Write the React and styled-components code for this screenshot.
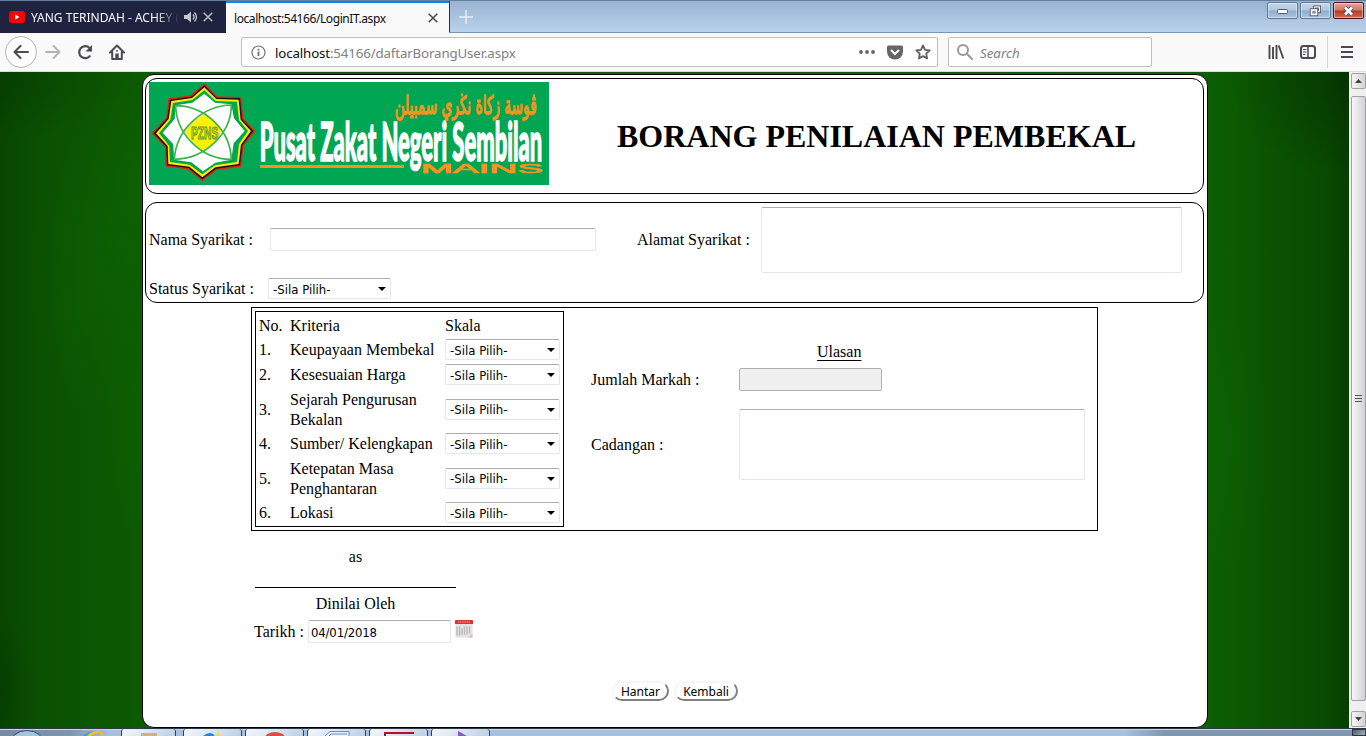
import React from 'react';
import styled, { createGlobalStyle, css } from 'styled-components';

const Global = createGlobalStyle`
  * { box-sizing: border-box; }
  body { margin: 0; overflow: hidden; }
`;
const ui = '"Noto Sans", "Open Sans", sans-serif';
const form = '"DejaVu Sans Condensed", "DejaVu Sans", sans-serif';

const Screen = styled.div`
  width: 1366px; height: 736px; display: flex; flex-direction: column; overflow: hidden;
  font: 16px/20px "Liberation Serif", serif; color: #000;
`;
const TitleBar = styled.div`
  height: 33px; display: flex; align-items: stretch; flex: none;
  background: linear-gradient(#98b3d2, #bad2eb); border-top: 1px solid #64809c; border-bottom: 1px solid #7b94b1;
`;
const Tab = styled.div`
  display: flex; align-items: center; height: 32px; font: 12px ${ui}; white-space: nowrap;
  ${p => p.$active
    ? css`width: 223px; padding: 0 11px 0 8px; background: #f9f9fa; border-top: 2px solid #0a84ff; color: #0c0c0d; justify-content: space-between; letter-spacing: -0.42px;`
    : css`width: 226px; padding: 0 12px 0 9px; background: #202340; color: #f9f9fa;`}
`;
const TabTitle = styled.span`
  width: 148px; margin: 0 5px 0 6px; overflow: hidden; letter-spacing: 0;
  mask-image: linear-gradient(90deg, #000 84%, transparent);
`;
const TabClose = styled.span`display: flex; margin-left: 4px;`;
const NewTab = styled.div`width: 33px; border-left: 1px solid #202c4a; display: flex; align-items: center; justify-content: center;`;
const WindowButtons = styled.div`margin-left: auto; display: flex; gap: 2px; padding: 1px 2px 0 0;`;
const WindowButton = styled.div`
  width: 31px; height: 17px; border: 1px solid ${p => (p.$close ? '#4c1620' : '#5d7797')}; border-radius: 2px;
  display: flex; align-items: center; justify-content: center; box-shadow: inset 0 0 0 1px #ffffff70;
  background: ${p => (p.$close ? 'linear-gradient(#e6a396, #d27865 48%, #b53a22 52%, #cb6c50)' : 'linear-gradient(#c3d5e9, #b2c8e0 48%, #91aecd 52%, #aac4df)')};
`;
const Toolbar = styled.div`
  height: 39px; flex: none; display: flex; align-items: center; background: #f9f9fa; border-bottom: 1px solid #dcdcdd; padding-left: 5px;
`;
const BackButton = styled.div`
  width: 32px; height: 32px; border: 1px solid #b5b5b7; border-radius: 50%; background: #fdfdfd; display: flex; align-items: center; justify-content: center;
`;
const ToolIcon = styled.div`width: 32px; display: flex; justify-content: center;`;
const Field = styled.div`
  height: 30px; display: flex; align-items: center; background: #fff; border: 1px solid #bfbfc1; border-radius: 2px; font: 13.3px ${ui}; color: #808080;
`;
const UrlField = styled(Field)`width: 697px; margin-left: 108px; padding: 0 6px 0 9px; letter-spacing: -0.14px;`;
const SearchField = styled(Field)`width: 204px; margin-left: 10px; padding-left: 8px; gap: 7px; font-style: italic;`;
const SearchHint = styled.span`padding-top: 2px;`;
const Url = styled.span`margin-left: 9px; padding-top: 2px; flex: 1; b { font-weight: 400; color: #0c0c0d; }`;
const UrlActions = styled.div`display: flex; align-items: center; gap: 12px;`;
const MenuArea = styled.div`margin-left: auto; display: flex; align-items: center;`;
const MenuButton = styled.div`height: 32px; width: 39px; margin-left: 3px; border-left: 1px solid #d7d7db; display: flex; align-items: center; justify-content: center;`;

const Viewport = styled.div`
  height: 656px; flex: none; display: flex;
`;
const Backdrop = styled.div`
  flex: 1; padding: 2px 0 0 142px;
  background:
    radial-gradient(ellipse 80px 150px at 105px 200px, #0d6c0450, transparent),
    radial-gradient(ellipse 60px 110px at 140px 110px, #0d700050, transparent),
    radial-gradient(ellipse 40px 130px at 142px 340px, #0d700040, transparent),
    radial-gradient(ellipse 130px 70px at 0 0, #022c0058, transparent),
    radial-gradient(ellipse 35px 80px at 0 620px, #022c0050, transparent),
    radial-gradient(ellipse 120px 110px at 1349px 0, #02260080, transparent),
    radial-gradient(ellipse 50px 130px at 1215px 370px, #0d6c0450, transparent),
    linear-gradient(90deg, #084600, #0a4e02 30px, #0b5402 65px, #0c5a02 142px, #0c5f02 1207px, #0b5502 1260px, #094b01 1325px, #073e00 1349px);
`;
const Card = styled.main`
  width: 1066px; height: 654px; border: 1px solid #000; border-radius: 12px; background: #fff; padding: 3px 3px 0 2px;
`;
const Panel = styled.section`width: 1059px; border: 1px solid #000; border-radius: 12px;`;
const HeaderPanel = styled(Panel)`height: 116px; display: flex; padding: 3px;`;
const Heading = styled.h1`
  margin: 0; flex: 1; padding: 36px 0 0 4px; text-align: center; font-size: 32px; line-height: 36px; font-weight: 700;
`;
const CompanyPanel = styled(Panel)`
  height: 101px; margin-top: 8px; padding: 0 3px; display: grid; grid-template-columns: 118px 370px 124px 1fr; grid-template-rows: 73px 25px; align-items: center;
`;
const TextInput = styled.input`
  width: ${p => p.$w}px; height: 23px; padding: 2px 2px 0; border: 1px solid #e3e6ec; border-top-color: #abadb3; border-radius: 2px; background: #fff; outline: 0;
  font: 13px ${form}; color: #000; letter-spacing: -0.15px;
  &:disabled { background: #f0f0f0; border-color: #b0b0b0; }
`;
const NameInput = styled(TextInput)`margin-left: 3px;`;
const TextArea = styled.textarea`
  display: block; width: ${p => p.$w}px; height: ${p => p.$h}px; border: 1px solid #e3e6ec; border-top-color: #abadb3; border-radius: 2px; resize: none; outline: 0;
`;
const SelectBox = styled.div`
  width: ${p => p.$w}px; height: 21px; border: 1px solid #e3e6ec; border-top-color: #abadb3; border-radius: 2px; background: #fff;
  display: flex; align-items: center; justify-content: space-between; padding: 1px 4px 0; font: 13px/18px ${form}; letter-spacing: 0.03px;
  span { padding-top: 1px; }
`;
const StatusField = styled.div`margin-left: 1px;`;

const Assessment = styled.section`
  width: 847px; height: 224px; margin: 4px 0 0 106px; border: 1px solid #000; padding: 3px; display: flex;
`;
const Criteria = styled.div`width: 309px; height: 216px; border: 1px solid #000; padding: 0 3px;`;
const CriteriaRow = styled.div`
  display: grid; grid-template-columns: 31px 155px 115px; height: ${p => p.$h || 25}px; align-items: center;
  > span { padding-top: ${p => (p.$head ? 3 : p.$h ? 2 : 1)}px; }
`;
const Review = styled.div`
  flex: 1; padding: 30px 0 0 27px; display: grid; grid-template-columns: 148px 1fr; grid-template-rows: 21px 35px 95px; align-items: center;
`;
const ReviewTitle = styled.div`grid-column: 2; text-decoration: underline; text-underline-offset: 3px; padding-left: 78px;`;
const Signature = styled.section`width: 240px; margin: 15px 0 0 109px;`;
const Signer = styled.div`width: 201px; height: 42px; margin-left: 1px; padding-top: 1px; border-bottom: 1px solid #000; text-align: center;`;
const SignCaption = styled.div`width: 201px; margin-left: 1px; padding-top: 6px; text-align: center;`;
const DateRow = styled.div`display: flex; align-items: center; margin-top: 6px; label { width: 54px; padding-top: 1px; } svg { margin: -5px 0 0 4px; }`;
const Actions = styled.div`display: flex; gap: 5px; margin: 38px 0 0 467px;`;
const ActionButton = styled.button`
  height: 20px; width: ${p => p.$w}px; padding: 0; border: 2px solid; border-color: #f6f6f6 #808080 #808080 #f6f6f6; border-radius: 10px; background: #fff;
  font: 12px/15px ${ui}; color: #000;
`;
const Scrollbar = styled.div`
  width: 17px; background: #f0f0f1; display: flex; flex-direction: column; align-items: center; padding: 1px 0 0 1px;
`;
const ScrollButton = styled.div`
  width: 15px; height: 16px; border: 1px solid #a0a0a3; border-radius: 2px; background: linear-gradient(90deg, #f6f6f6, #d2d2d5); display: flex; align-items: center; justify-content: center;
`;
const Thumb = styled(ScrollButton)`height: 605px; margin: 7px 0 10px;`;
const Taskbar = styled.div`
  height: 8px; flex: none; display: flex; align-items: flex-start; border-top: 1px solid #2d3846; box-shadow: inset 0 1px #c9d8e9;
  background: linear-gradient(90deg, #788ba3, #8093ad 70px, #a6c0de 110px, #a6c0de 1125px, #8295af 1165px, #8295af);
`;
const StartArea = styled.div`width: 121px; height: 7px; svg { display: block; }`;
const TaskButton = styled.div`
  width: ${p => p.$w || 59}px; height: 7px; margin-right: ${p => p.$gap || 3}px; border: 1px solid #2f3e52; border-width: 0 1px; border-radius: 3px 3px 0 0;
  background: linear-gradient(135deg, #f4f7fb, #bdd0e6); display: flex; justify-content: center; align-items: flex-end;
`;
const ShowDesktop = styled.div`width: 14px; height: 7px; margin-left: auto; border: 1px solid #303846; background: linear-gradient(135deg, #4e5a68, #a6b1bf);`;

const Cross = ({ color, size = 10 }) => (
  <svg width={size} height={size} viewBox="0 0 10 10"><path d="M.7.7 9.3 9.3M9.3.7.7 9.3" stroke={color} strokeWidth="1.5" /></svg>
);

const Select = ({ width }) => (
  <SelectBox $w={width}>
    <span>-Sila Pilih-</span>
    <svg width="8" height="4" viewBox="0 0 8 4"><path d="M0 0h8L4 4z" /></svg>
  </SelectBox>
);

const Logo = () => (
  <svg width="400" height="103" viewBox="21 36 1200 309">
    <rect x="21" y="36" width="1200" height="309" fill="#00a651" />
    <path d="M187 40 226 79 298 81 304 145 340 183 305 228 298 290 224 300 181 334 138 298 71 290 69 232 29 190 72 143 80 85 146 76Z" fill="#e2211c" />
    <path d="M187 46 224 83 294 85 300 147 334 183 301 226 294 286 222 296 181 328 140 294 75 286 73 230 35 190 76 145 84 89 148 80Z" fill="#111" />
    <path d="M187 52 223 87 290 89 296 149 327 183 297 224 290 282 220 292 181 322 142 290 79 282 77 228 42 190 80 147 88 93 150 84Z" fill="#ffec00" />
    <path d="M187 61 221 93 285 95 291 151 318 183 291 222 285 276 219 286 181 313 143 284 84 276 82 228 51 190 85 149 93 99 151 90Z" fill="#00a651" />
    <path d="M187 71 219 98 268 103 276 145 308 183 275 220 268 269 220 278 183 304 148 277 96 269 94 223 62 188 98 147 101 106 151 98Z" fill="#fff" />
    <path d="M185 134Q220 150 238 184 221 220 184 242 147 219 130 186 150 150 185 134Z" fill="#fff200" />
    <g fill="none" stroke="#3bb44a" strokeWidth="5">
      <path d="M101 107C190 108 265 180 268 268M101 107C103 190 175 268 268 268M268 105C180 107 102 180 97 268M268 105C268 190 190 267 97 268" />
    </g>
    <text x="147" y="207" textLength="82" lengthAdjust="spacingAndGlyphs" fontFamily="Liberation Sans" fontWeight="700" fontSize="50" fill="#e8dc15" stroke="#4c9a31" strokeWidth="3">PZNS</text>
    <text transform="translate(1184 131) scale(1 1.22)" textLength="426" lengthAdjust="spacingAndGlyphs" direction="rtl" fontFamily="DejaVu Sans" fontSize="62" fill="#f7941d" stroke="#f7941d" strokeWidth="3.500">ڤوسة زكاة نڬري سمبيلن</text>
    <text transform="translate(353 273) scale(1 1.600)" textLength="848" lengthAdjust="spacingAndGlyphs" fontFamily="Lato, sans-serif" fontWeight="900" fontSize="101" fill="#fff" stroke="#fff" strokeWidth="3">Pusat Zakat Negeri Sembilan</text>
    <rect x="354" y="285" width="432" height="9" fill="#f7941d" />
    <text x="836" y="310" textLength="367" lengthAdjust="spacingAndGlyphs" fontFamily="Liberation Sans" fontWeight="400" fontSize="41" fill="#f7941d" stroke="#f7941d" strokeWidth="2">MAINS</text>
  </svg>
);

const criteria = [
  ['Keupayaan Membekal'], ['Kesesuaian Harga'], ['Sejarah Pengurusan Bekalan', 44],
  ['Sumber/ Kelengkapan'], ['Ketepatan Masa Penghantaran', 44], ['Lokasi'],
];

const BrowserChrome = () => (
  <>
    <TitleBar>
      <Tab>
        <svg width="16" height="12" viewBox="0 0 16 12"><rect width="16" height="12" rx="3" fill="#f00" /><path d="M6.3 3.5v5L10.5 6z" fill="#fff" /></svg>
        <TabTitle>YANG TERINDAH - ACHEY (</TabTitle>
        <svg width="15" height="12" viewBox="0 0 15 12"><path d="M0 4h3l4-3.5v11L3 8H0z" fill="#c6c7cf" /><path d="M9 3.5q2 2.5 0 5M10.5 1.5q4 4.500 0 9" fill="none" stroke="#c6c7cf" strokeWidth="1.300" /></svg>
        <TabClose><Cross color="#b9bac4" /></TabClose>
      </Tab>
      <Tab $active><span>localhost:54166/LoginIT.aspx</span><Cross color="#4a4a4f" /></Tab>
      <NewTab><svg width="14" height="14" viewBox="0 0 14 14"><path d="M7 0v14M0 7h14" stroke="#e6eff8" strokeWidth="1.500" /></svg></NewTab>
      <WindowButtons>
        <WindowButton><svg width="12" height="6" viewBox="0 0 12 6"><rect x=".5" y="1.500" width="10" height="4" rx="1" fill="#fff" stroke="#535666" /></svg></WindowButton>
        <WindowButton><svg width="13" height="12" viewBox="0 0 13 12"><rect x="5.500" y="2" width="5" height="4.500" fill="none" stroke="#535666" strokeWidth="3" /><rect x="5.500" y="2" width="5" height="4.500" fill="none" stroke="#fff" strokeWidth="1.200" /><rect x="2.500" y="5" width="5" height="4.500" fill="none" stroke="#535666" strokeWidth="3.400" /><rect x="2.500" y="5" width="5" height="4.500" fill="#7b90aa" stroke="#fff" strokeWidth="1.600" /></svg></WindowButton>
        <WindowButton $close><svg width="13" height="10" viewBox="0 0 13 10"><path d="m3 1.500 7 7M10 1.500l-7 7" stroke="#535666" strokeWidth="4.500" /><path d="m3 1.500 7 7M10 1.500l-7 7" stroke="#fff" strokeWidth="2.500" /></svg></WindowButton>
      </WindowButtons>
    </TitleBar>
    <Toolbar>
      <BackButton><svg width="16" height="14" viewBox="0 0 16 14"><path d="M15 7H1.500M7.500 1l-6 6 6 6" fill="none" stroke="#4a4a4f" strokeWidth="2" strokeLinecap="round" strokeLinejoin="round" /></svg></BackButton>
      <ToolIcon><svg width="16" height="14" viewBox="0 0 16 14"><path d="M1 7h13.500M8.500 1l6 6-6 6" fill="none" stroke="#b5b5b8" strokeWidth="2" strokeLinecap="round" strokeLinejoin="round" /></svg></ToolIcon>
      <ToolIcon><svg width="16" height="16" viewBox="0 0 16 16"><path d="M13.200 11.500A6 6 0 1 1 12.500 4" fill="none" stroke="#4a4a4f" strokeWidth="2.200" /><path d="M15 1v6.500H8.500z" fill="#4a4a4f" /></svg></ToolIcon>
      <ToolIcon><svg width="16" height="16" viewBox="0 0 16 16"><path d="M1 8.500 8 1.500l7 7M3.200 8V15h9.600V8" fill="none" stroke="#4a4a4f" strokeWidth="2" strokeLinecap="round" strokeLinejoin="round" /><path d="M6.300 9.500h3.400V15H6.300z" fill="#4a4a4f" /><rect x="7.200" y="6" width="1.600" height="1.600" fill="#4a4a4f" /></svg></ToolIcon>
      <UrlField>
        <svg width="15" height="15" viewBox="0 0 15 15"><circle cx="7.500" cy="7.500" r="6.500" fill="none" stroke="#737373" strokeWidth="1.200" /><path d="M6.600 6.500h1.800V11H6.600zM6.600 3.700h1.800v1.700H6.600z" fill="#737373" /></svg>
        <Url><b>localhost</b>:54166/daftarBorangUser.aspx</Url>
        <UrlActions>
          <svg width="16" height="4" viewBox="0 0 16 4" fill="#666"><circle cx="2" cy="2" r="1.900" /><circle cx="8" cy="2" r="1.900" /><circle cx="14" cy="2" r="1.900" /></svg>
          <svg width="16" height="15" viewBox="0 0 16 15"><path d="M1.500.5h13q1.500 0 1.500 1.500v4.500a8 8 0 0 1-16 0V2Q0 .5 1.500.5z" fill="#666" /><path d="m4.500 5.500 3.500 3.500 3.500-3.500" fill="none" stroke="#fff" strokeWidth="2" strokeLinecap="round" /></svg>
          <svg width="16" height="16" viewBox="0 0 16 16"><path d="m8 1.500 2 4.300 4.700.6-3.500 3.300.9 4.700L8 12.100l-4.100 2.300.9-4.700L1.300 6.400 6 5.800z" fill="none" stroke="#606063" strokeWidth="1.800" strokeLinejoin="round" /></svg>
        </UrlActions>
      </UrlField>
      <SearchField>
        <svg width="16" height="16" viewBox="0 0 16 16"><circle cx="6" cy="6" r="5" fill="none" stroke="#989898" strokeWidth="2" /><path d="m9.800 9.800 5.200 5.200" stroke="#989898" strokeWidth="2" strokeLinecap="round" /></svg>
        <SearchHint>Search</SearchHint>
      </SearchField>
      <MenuArea>
        <ToolIcon><svg width="16" height="14" viewBox="0 0 16 14"><path d="M1.500 0v14M5 2v12M8.500 0v14M10.700.500l4.600 13" fill="none" stroke="#4a4a4f" strokeWidth="1.900" /></svg></ToolIcon>
        <ToolIcon><svg width="16" height="14" viewBox="0 0 16 14"><rect x="1" y="1" width="14" height="12" rx="2.500" fill="none" stroke="#4a4a4f" strokeWidth="2" /><path d="M8 1v12" stroke="#4a4a4f" strokeWidth="1.500" /><path d="M3 4.500h3.500M3 7h3.500M3 9.500h2.500" stroke="#4a4a4f" /></svg></ToolIcon>
        <MenuButton><svg width="12" height="12" viewBox="0 0 12 12"><path d="M0 1h12M0 6h12M0 11h12" stroke="#4a4a4f" strokeWidth="2" /></svg></MenuButton>
      </MenuArea>
    </Toolbar>
  </>
);

export default function App() {
  return (
    <Screen>
      <Global />
      <BrowserChrome />
      <Viewport>
        <Backdrop>
          <Card>
            <HeaderPanel><Logo /><Heading>BORANG PENILAIAN PEMBEKAL</Heading></HeaderPanel>
            <CompanyPanel>
              <label>Nama Syarikat :</label><NameInput $w={326} />
              <label>Alamat Syarikat :</label><TextArea $w={421} $h={66} />
              <label>Status Syarikat :</label><StatusField><Select width={123} /></StatusField>
            </CompanyPanel>
            <Assessment>
              <Criteria>
                <CriteriaRow $head><span>No.</span><span>Kriteria</span><span>Skala</span></CriteriaRow>
                {criteria.map(([name, h], i) => (
                  <CriteriaRow key={name} $h={h}><span>{i + 1}.</span><span>{name}</span><Select width={115} /></CriteriaRow>
                ))}
              </Criteria>
              <Review>
                <ReviewTitle>Ulasan</ReviewTitle>
                <label>Jumlah Markah :</label><TextInput $w={143} disabled />
                <label>Cadangan :</label><TextArea $w={346} $h={71} />
              </Review>
            </Assessment>
            <Signature>
              <Signer>as</Signer>
              <SignCaption>Dinilai Oleh</SignCaption>
              <DateRow>
                <label>Tarikh :</label><TextInput $w={143} defaultValue="04/01/2018" />
                <svg width="18" height="18" viewBox="0 0 18 18"><rect x=".5" y="1" width="17" height="16.500" rx="1" fill="#e4e1df" /><path d="M0 1q0-1 1-1h16q1 0 1 1v3H0z" fill="#d8352a" /><path d="M3 2h12" stroke="#f09a92" strokeDasharray="1.500 .6" /><path d="M2 6.500v9M4.500 6.500v9M7 8v7M9.500 6.500v8M12 6.500v8M14.500 6.500v7" stroke="#b9b9bb" strokeWidth="1.300" /><path d="m13 17.500 4.500-4v4z" fill="#c6c2c0" /></svg>
              </DateRow>
            </Signature>
            <Actions><ActionButton $w={57}>Hantar</ActionButton><ActionButton $w={64}>Kembali</ActionButton></Actions>
          </Card>
        </Backdrop>
        <Scrollbar>
          <ScrollButton><svg width="7" height="4" viewBox="0 0 7 4"><path d="M0 4h7L3.500 0z" fill="#444" /></svg></ScrollButton>
          <Thumb><svg width="7" height="8" viewBox="0 0 7 8"><path d="M0 .5h7M0 3.500h7M0 6.500h7" stroke="#555" /></svg></Thumb>
          <ScrollButton><svg width="7" height="4" viewBox="0 0 7 4"><path d="M0 0h7L3.500 4z" fill="#444" /></svg></ScrollButton>
        </Scrollbar>
      </Viewport>
      <Taskbar>
        <StartArea><svg width="121" height="7" viewBox="0 0 121 7"><ellipse cx="27" cy="15" rx="17" ry="13.500" fill="#a9c3d8" stroke="#254f78" /><path d="M84 7q6-4 12-3" stroke="#3ba0dc" strokeWidth="2.500" fill="none" /><path d="M88 7q12-8 15 0" stroke="#f2bf25" strokeWidth="2.500" fill="none" /></svg></StartArea>
        <TaskButton $w={55} $gap={7}><svg width="16" height="3"><rect width="16" height="3" fill="#c9b778" /></svg></TaskButton>
        <TaskButton><svg width="20" height="5" viewBox="0 0 20 5"><path d="M0 5q8-6 12 0" fill="#2583d9" /><path d="m11 5 2-1 2-4 2 4 3 1z" fill="#f8df35" /></svg></TaskButton>
        <TaskButton><svg width="20" height="4" viewBox="0 0 20 4"><ellipse cx="10" cy="6" rx="10" ry="6" fill="#dc4e42" /></svg></TaskButton>
        <TaskButton><svg width="26" height="5" viewBox="0 0 26 5"><path d="M1 5 6 .500h19V5M5 5l2-2h16" fill="#e9f0ff" stroke="#7088c7" /></svg></TaskButton>
        <TaskButton><svg width="30" height="4" viewBox="0 0 30 4"><path d="M0 0h30v2H2v2H0z" fill="#b2131d" /></svg></TaskButton>
        <TaskButton><svg width="22" height="5" viewBox="0 0 22 5"><path d="M8 0v5h9z" fill="#8758bd" /></svg></TaskButton>
        <ShowDesktop />
      </Taskbar>
    </Screen>
  );
}
